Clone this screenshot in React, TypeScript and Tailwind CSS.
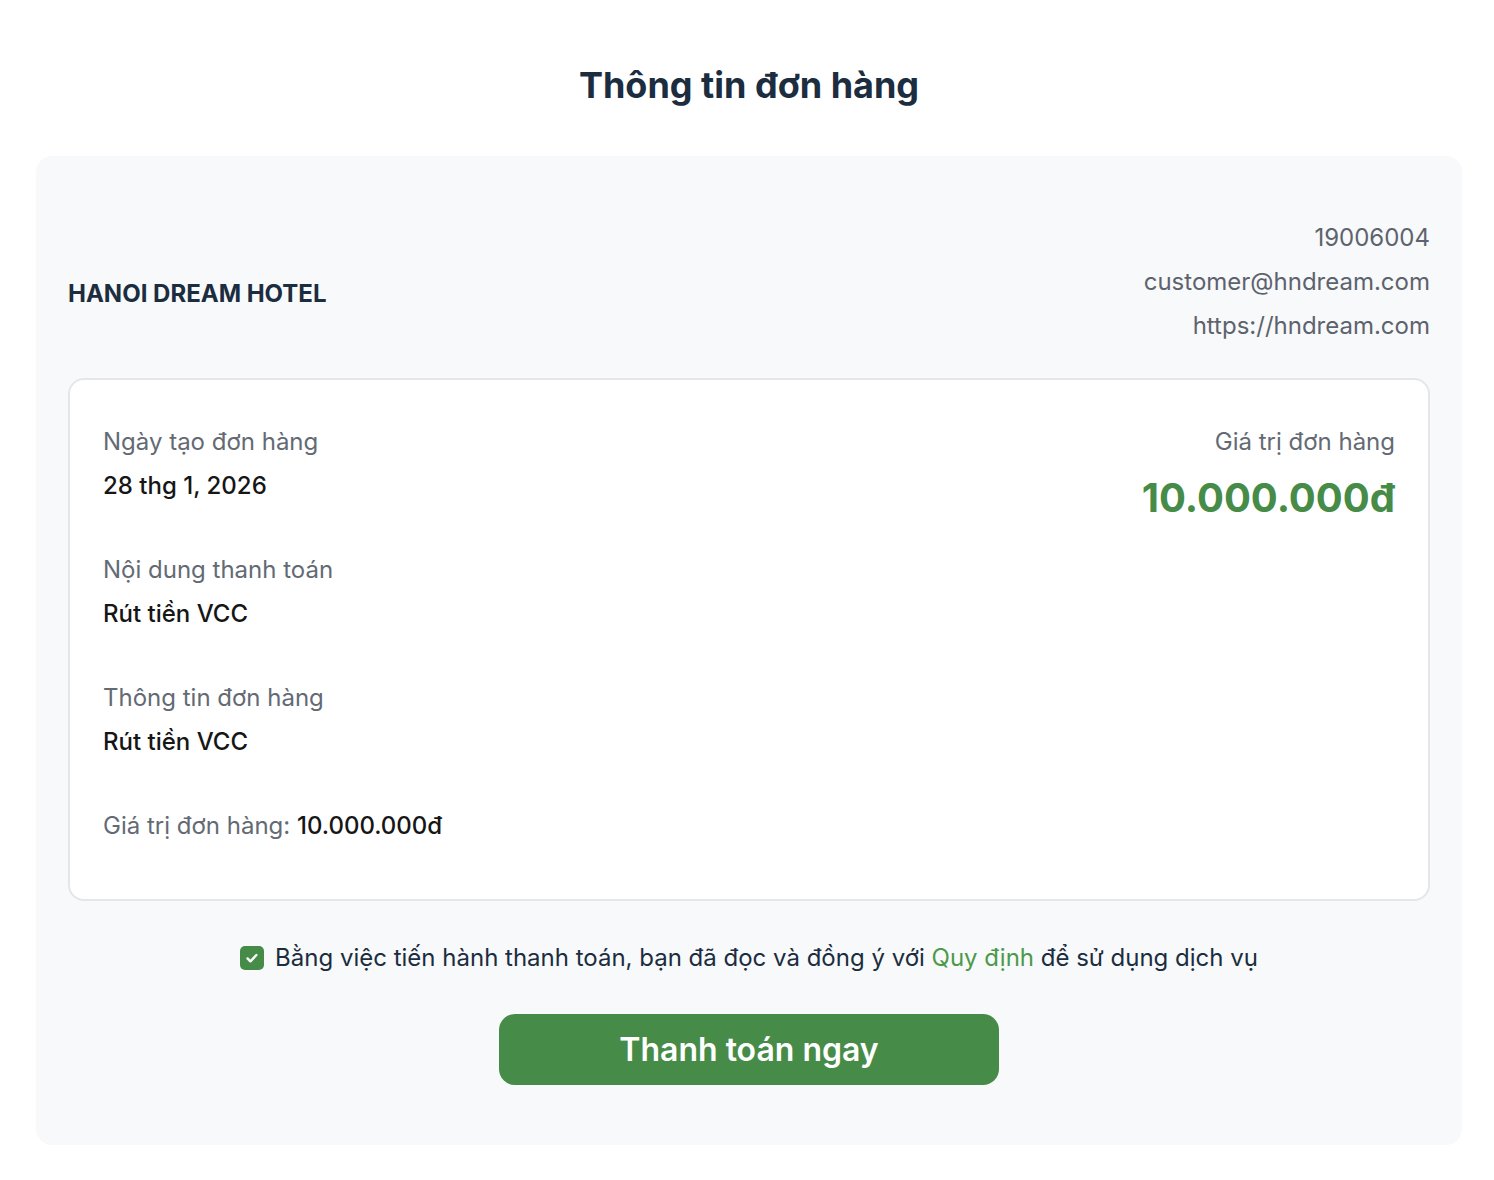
import React from 'react';

const details = [
  { label: 'Ngày tạo đơn hàng', value: '28 thg 1, 2026' },
  { label: 'Nội dung thanh toán', value: 'Rút tiền VCC' },
  { label: 'Thông tin đơn hàng', value: 'Rút tiền VCC' },
];

function CheckIcon() {
  return (
    <span className="flex h-6 w-6 shrink-0 items-center justify-center rounded-[5px] bg-[#468c48]">
      <svg viewBox="0 0 16 16" className="h-4 w-4" fill="none">
        <path d="M3.5 8.4l2.9 2.9 6-6.3" stroke="white" strokeWidth="2.4" strokeLinecap="round" strokeLinejoin="round" />
      </svg>
    </span>
  );
}

export default function App() {
  return (
    <div className="bg-white font-['Inter',sans-serif] pt-[65px] pb-[30px]">
      <h1 className="pl-1 text-center text-[36px] leading-[40px] font-bold text-[#1b2d3f]">
        Thông tin đơn hàng
      </h1>

      <div className="ml-[36px] mr-[32px] mt-[51px] rounded-[16px] bg-[#f8f9fa] px-8 pt-[60px] pb-[60px]">
        <div className="flex items-center justify-between">
          <div className="pt-6 text-[24px] font-bold text-[#1b2d3f]">HANOI DREAM HOTEL</div>
          <div className="text-right text-[24px] leading-[44px] text-[#5d636e]">
            <div>19006004</div>
            <div>customer@hndream.com</div>
            <div>https://hndream.com</div>
          </div>
        </div>

        <div className="mt-[30px] flex justify-between rounded-[16px] border-2 border-[#e4e6e9] bg-white pl-[33px] pr-[33px] pt-[40px] pb-[51px]">
          <div className="flex flex-col gap-10 text-[24px] leading-[44px]">
            {details.map((d) => (
              <div key={d.label}>
                <div className="text-[#636a74]">{d.label}</div>
                <div className="font-medium text-[#161616]">{d.value}</div>
              </div>
            ))}
            <div>
              <span className="text-[#636a74]">Giá trị đơn hàng: </span>
              <span className="font-medium text-[#161616]">10.000.000đ</span>
            </div>
          </div>
          <div className="text-right">
            <div className="text-[24px] leading-[44px] text-[#636a74]">Giá trị đơn hàng</div>
            <div className="text-[40px] leading-[68px] font-bold text-[#468c48]">10.000.000đ</div>
          </div>
        </div>

        <div className="mt-[35px] flex items-center justify-center gap-[11px] text-[24px] leading-[44px] text-[#1b2d3f]">
          <CheckIcon />
          <span>
            Bằng việc tiến hành thanh toán, bạn đã đọc và đồng ý với{' '}
            <span className="text-[#4b9a4b]">Quy định</span> để sử dụng dịch vụ
          </span>
        </div>

        <div className="mt-[34px] flex justify-center">
          <button className="h-[71px] w-[500px] rounded-[16px] bg-[#468c48] text-[32px] font-semibold text-white">
            Thanh toán ngay
          </button>
        </div>
      </div>
    </div>
  );
}
